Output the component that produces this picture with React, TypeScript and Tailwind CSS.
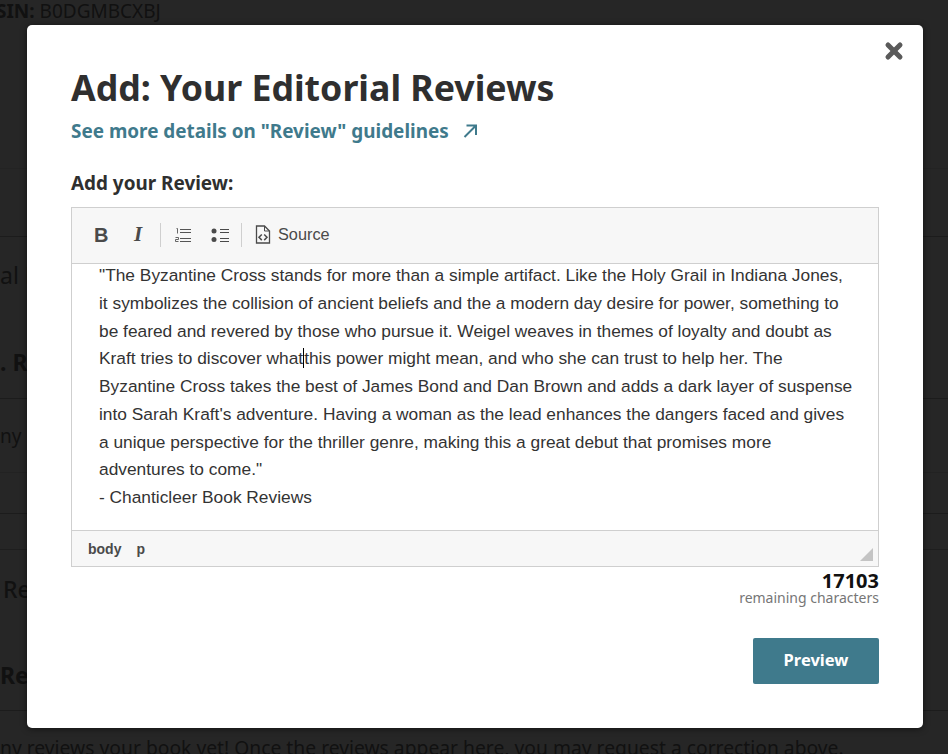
import { X } from "lucide-react"

const reviewLines = [
  `"The Byzantine Cross stands for more than a simple artifact. Like the Holy Grail in Indiana Jones,`,
  `it symbolizes the collision of ancient beliefs and the a modern day desire for power, something to`,
  `be feared and revered by those who pursue it. Weigel weaves in themes of loyalty and doubt as`,
]

function BoldIcon() {
  return <span className="w-[14px] text-center font-['Liberation_Sans',sans-serif] text-[20px] leading-none font-bold text-[#4a4a4a]">B</span>
}

function ItalicIcon() {
  return <span className="w-[14px] text-center font-['Liberation_Serif',serif] text-[21px] leading-none font-bold italic text-[#4a4a4a]">I</span>
}

function NumberedIcon() {
  return (
    <svg width="18" height="16" viewBox="0 0 18 16" className="text-[#555555]">
      <path d="M6 2.500h11M6 5.500h11M6 11.500h11M6 14.500h11" stroke="currentColor" strokeWidth="1" />
      <path d="M2.500 1.500h1v5M1.500 10.500h3v2h-3v2h3" stroke="currentColor" strokeWidth="0.9" fill="none" />
    </svg>
  )
}

function BulletIcon() {
  return (
    <svg width="18" height="16" viewBox="0 0 18 16" className="text-[#4a4a4a]">
      <circle cx="3" cy="4" r="2.500" fill="currentColor" />
      <circle cx="3" cy="12.500" r="2.500" fill="currentColor" />
      <path d="M9 2.500h9M9 5.500h9M9 11.500h9M9 14.500h9" stroke="currentColor" strokeWidth="1" />
    </svg>
  )
}

function SourceIcon() {
  return (
    <svg width="16" height="19" viewBox="0 0 16 19" fill="none" className="text-[#4a4a4a]">
      <path d="M1.500 1h8l5 5v12h-13z" stroke="currentColor" strokeWidth="1.300" />
      <path d="M9.500 1v5h5" stroke="currentColor" strokeWidth="1" />
      <path d="M6.800 9.500l-2.800 2.800 2.800 2.800M9.200 9.500l2.800 2.800-2.800 2.800" stroke="currentColor" strokeWidth="1.500" />
    </svg>
  )
}

function ExternalIcon() {
  return (
    <svg width="14" height="14" viewBox="0 0 14 14" fill="none" className="text-[#3f7a8c]">
      <path d="M1.500 13L12.500 2M3.500 1.500h9.500V11" stroke="currentColor" strokeWidth="2" />
    </svg>
  )
}

function BackgroundPage() {
  return (
    <div className="h-[754px] overflow-hidden bg-[#262626] font-['Noto_Sans',sans-serif] text-[#111111]">
      <div className="h-[169px] border-b border-[#232323] text-[19px] leading-[22px]">
        <p className="-ml-[4px]"><b>SIN:</b> B0DGMBCXBJ</p>
      </div>
      <div className="h-[68px] border-b border-[#1c1c1c]" />
      <div className="h-[162px] border-b border-[#1c1c1c] pt-[22px] text-[23px] leading-[32px]">
        <p>al R</p>
        <p className="mt-[55px] font-bold">. Re</p>
      </div>
      <div className="h-[74px] border-b border-[#222222] pt-[24px] text-[19px] leading-[26px]">
        <p>ny r</p>
      </div>
      <div className="h-[41px] border-b border-[#1c1c1c]" />
      <div className="h-[36px] border-b border-[#1e1e1e]" />
      <div className="h-[161px] border-b border-[#1c1c1c] pt-[23px] text-[23px] leading-[32px]">
        <p className="pl-[3px] font-medium">Re</p>
        <p className="mt-[54px] font-bold">Rev</p>
      </div>
      <p className="mt-[24px] text-[19.300px] leading-[26px] whitespace-nowrap">ny reviews your book yet! Once the reviews appear here, you may request a correction above.</p>
    </div>
  )
}

export default function App() {
  return (
    <div className="relative h-[754px] w-[948px] overflow-hidden">
      <BackgroundPage />
      <div className="absolute top-[25px] left-[27px] flex h-[703px] w-[896px] flex-col rounded-[5px] bg-white px-[44px] font-['Noto_Sans',sans-serif] shadow-[0_1px_6px_rgba(0,0,0,0.5)]">
        <X className="absolute top-[14px] right-[17px] text-[#5a5a5a]" size={24} strokeWidth={5} />
        <h1 className="mt-[40px] text-[35.700px] leading-[44px] font-bold text-[#2f2f2f]">Add: Your Editorial Reviews</h1>
        <a className="mt-[10px] flex items-center gap-[14px] text-[18.900px] leading-[24px] font-bold text-[#3f7a8c]">
          See more details on "Review" guidelines
          <ExternalIcon />
        </a>
        <p className="mt-[28px] text-[18.900px] leading-[24px] font-bold text-[#2f2f2f]">Add your Review:</p>
        <div className="mt-[12px] border border-[#cfcfcf] font-['Liberation_Sans',sans-serif]">
          <div className="flex h-[56px] items-center border-b border-[#cfcfcf] bg-[#f7f7f7] pb-[2px] pl-[22px] text-[#4a4a4a]">
            <BoldIcon />
            <span className="ml-[23px] flex"><ItalicIcon /></span>
            <span className="mr-[13px] ml-[15px] h-[24px] w-px bg-[#cfcfcf]" />
            <NumberedIcon />
            <span className="ml-[19px] flex"><BulletIcon /></span>
            <span className="ml-[12px] h-[24px] w-px bg-[#cfcfcf]" />
            <span className="ml-[13px] flex"><SourceIcon /></span>
            <span className="ml-[7px] text-[16.300px]">Source</span>
          </div>
          <div className="h-[266px] overflow-hidden text-[17.330px] leading-[27.750px] whitespace-nowrap text-[#333333]">
            <div className="-mt-[2px] pl-[27px]">
              {reviewLines.map((line) => (
                <p key={line}>{line}</p>
              ))}
              <p>Kraft tries to discover what<span className="border-l border-black" />this power might mean, and who she can trust to help her. The</p>
              <p>Byzantine Cross takes the best of James Bond and Dan Brown and adds a dark layer of suspense</p>
              <p>into Sarah Kraft's adventure. Having a woman as the lead enhances the dangers faced and gives</p>
              <p>a unique perspective for the thriller genre, making this a great debut that promises more</p>
              <p>adventures to come."</p>
              <p>- Chanticleer Book Reviews</p>
            </div>
          </div>
          <div className="relative flex h-[36px] items-center gap-[15px] border-t border-[#cfcfcf] bg-[#f7f7f7] pt-[1px] pl-[16px] text-[14px] font-bold text-[#4a4a4a]">
            <span>body</span>
            <span>p</span>
            <svg width="13" height="13" viewBox="0 0 13 13" className="absolute right-[5px] bottom-[5px]">
              <path d="M13 0v13H0z" fill="#c4c4c4" />
            </svg>
          </div>
        </div>
        <div className="mt-[3px] text-right">
          <p className="text-[20px] leading-[21px] font-bold text-[#111111]">17103</p>
          <p className="text-[14px] leading-[14px] text-[#767676]">remaining characters</p>
        </div>
        <button className="mt-[33px] ml-auto h-[46px] w-[126px] rounded-[2px] bg-[#3f7a8c] pb-[2px] text-[16.500px] font-bold text-white">Preview</button>
      </div>
    </div>
  )
}
